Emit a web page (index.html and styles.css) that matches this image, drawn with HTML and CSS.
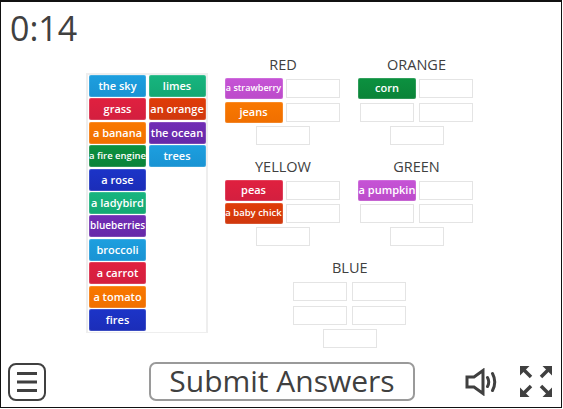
FILE: index.html
```html
<!DOCTYPE html>
<html lang="en">
<head>
    <meta charset="UTF-8">
    <title>Sort by colour</title>
    <link rel="stylesheet" href="styles.css">
</head>
<body>
    <div class="frame">
        <div class="timer">0:14</div>
        <div class="board">
            <div class="bank">
                <div class="bankcol">
                    <div class="tile blue">the sky</div>
                    <div class="tile crimson">grass</div>
                    <div class="tile orange">a banana</div>
                    <div class="tile green small">a fire engine</div>
                    <div class="tile indigo">a rose</div>
                    <div class="tile teal">a ladybird</div>
                    <div class="tile purple mid">blueberries</div>
                    <div class="tile blue">broccoli</div>
                    <div class="tile crimson">a carrot</div>
                    <div class="tile orange">a tomato</div>
                    <div class="tile indigo">fires</div>
                </div>
                <div class="bankcol">
                    <div class="tile teal">limes</div>
                    <div class="tile red">an orange</div>
                    <div class="tile purple">the ocean</div>
                    <div class="tile blue">trees</div>
                </div>
            </div>
            <div class="cats">
                <div class="cat">
                    <div class="cattitle">RED</div>
                    <div class="row"><div class="tile magenta tiny">a strawberry</div><div class="slot"></div></div>
                    <div class="row"><div class="tile orange">jeans</div><div class="slot"></div></div>
                    <div class="row"><div class="slot"></div></div>
                </div>
                <div class="cat">
                    <div class="cattitle">ORANGE</div>
                    <div class="row"><div class="tile green">corn</div><div class="slot"></div></div>
                    <div class="row"><div class="slot"></div><div class="slot"></div></div>
                    <div class="row"><div class="slot"></div></div>
                </div>
                <div class="cat">
                    <div class="cattitle">YELLOW</div>
                    <div class="row"><div class="tile crimson">peas</div><div class="slot"></div></div>
                    <div class="row"><div class="tile red small">a baby chick</div><div class="slot"></div></div>
                    <div class="row"><div class="slot"></div></div>
                </div>
                <div class="cat">
                    <div class="cattitle">GREEN</div>
                    <div class="row"><div class="tile magenta">a pumpkin</div><div class="slot"></div></div>
                    <div class="row"><div class="slot"></div><div class="slot"></div></div>
                    <div class="row"><div class="slot"></div></div>
                </div>
                <div class="cat wide">
                    <div class="cattitle">BLUE</div>
                    <div class="row"><div class="slot"></div><div class="slot"></div></div>
                    <div class="row"><div class="slot"></div><div class="slot"></div></div>
                    <div class="row"><div class="slot"></div></div>
                </div>
            </div>
        </div>
        <div class="footer">
            <svg class="menuicon" width="38" height="38" viewBox="0 0 38 38" fill="none" stroke="#404040">
                <rect x="1" y="1" width="36" height="36" rx="7" stroke-width="2"/>
                <path d="M9 10.500H29M9 19H29M9 27.500H29" stroke-width="3"/>
            </svg>
            <button class="submit">Submit Answers</button>
            <div class="righticons">
                <svg width="33" height="28" viewBox="0 0 33 28" fill="none" stroke="#404040" stroke-width="3">
                    <path d="M2 9H9L18 2.500V25.500L9 19H2Z"/>
                    <path d="M22.500 9.500Q25 14 22.500 18.500M27.500 5.500Q32 14 27.500 22.500" stroke-linecap="round"/>
                </svg>
                <svg width="32" height="31" viewBox="0 0 32 31" fill="#404040" stroke="#404040">
                    <path d="M0 0H9.500L0 9.500Z" stroke="none"/>
                    <path d="M32 0H22.500L32 9.500Z" stroke="none"/>
                    <path d="M0 31H9.500L0 21.500Z" stroke="none"/>
                    <path d="M32 31H22.500L32 21.500Z" stroke="none"/>
                    <path d="M3 3L11 11M29 3L21 11M3 28L11 20M29 28L21 20" stroke-width="3.500" fill="none"/>
                </svg>
            </div>
        </div>
    </div>
</body>
</html>
```

FILE: styles.css
```css
*{
    box-sizing: border-box;
}
body{
    margin: 0;
    background-color: white;
    font-family: "Open Sans", sans-serif;
}
.frame{
    width: 562px;
    height: 408px;
    border: 1px solid #111;
    border-top-width: 2px;
    display: flex;
    flex-direction: column;
    color: #404040;
}
.timer{
    height: 50px;
    padding-left: 9px;
    font-size: 34px;
    font-weight: 500;
    line-height: 52px;
}
.board{
    display: flex;
    height: 310px;
    padding-left: 85px;
    padding-top: 21px;
}
.bank{
    width: 122px;
    height: 260px;
    display: flex;
    gap: 2.500px;
    padding: 0 0 0 1px;
    border: 2px solid #eeeeee;
    border-bottom-width: 1px;
}
.bankcol{
    display: flex;
    flex-direction: column;
    gap: 1.400px;
}
.tile{
    width: 57px;
    height: 22px;
    flex-shrink: 0;
    border-radius: 2px;
    color: white;
    font-size: 11px;
    font-weight: 600;
    line-height: 21px;
    text-align: center;
    white-space: nowrap;
    box-shadow: inset 0 0 0 1px rgba(255,255,255,0.15);
}
.small{
    font-size: 9.500px;
}
.mid{
    font-size: 10px;
}
.tiny{
    font-size: 9px;
}
.blue{ background: linear-gradient(#1d9fdf, #1993d3); }
.teal{ background: linear-gradient(#17b57f, #14a873); }
.crimson{ background: linear-gradient(#e0203f, #d31f3f); }
.red{ background: linear-gradient(#e03c08, #d0380e); }
.orange{ background: linear-gradient(#f97800, #f06f00); }
.purple{ background: linear-gradient(#712db5, #6629a8); }
.green{ background: linear-gradient(#0c9140, #0b8338); }
.indigo{ background: linear-gradient(#1c34c8, #1b2db8); }
.magenta{ background: linear-gradient(#c653d6, #bc4bca); }
.cats{
    width: 251.500px;
    margin-left: 16px;
    margin-top: -20px;
    display: grid;
    grid-template-columns: 118px 118px;
    grid-auto-rows: 101.500px;
    column-gap: 15.500px;
}
.cat.wide{
    grid-column: 1 / 3;
    justify-self: center;
    width: 118px;
}
.cattitle{
    height: 24px;
    font-size: 14.500px;
    line-height: 24px;
    text-align: center;
}
.row{
    height: 23.400px;
    display: flex;
    justify-content: center;
    align-items: center;
    gap: 5px;
}
.row .tile{
    width: 58px;
    height: 21px;
    margin: 0 -2px;
    line-height: 20px;
}
.slot{
    width: 54px;
    height: 19px;
    border: 1px solid #e4e4e4;
}
.footer{
    flex: 1;
    display: flex;
    align-items: center;
    padding: 0 0 6px 7px;
}
.submit{
    width: 266px;
    height: 39px;
    margin-left: 103px;
    padding: 0 0 4px 0;
    background-color: white;
    border: 2px solid #9a9a9a;
    border-radius: 7px;
    color: #404040;
    font-family: "Open Sans", sans-serif;
    font-size: 30px;
    line-height: 34px;
}
.righticons{
    display: flex;
    align-items: center;
    gap: 22px;
    margin-left: 50px;
}
```
